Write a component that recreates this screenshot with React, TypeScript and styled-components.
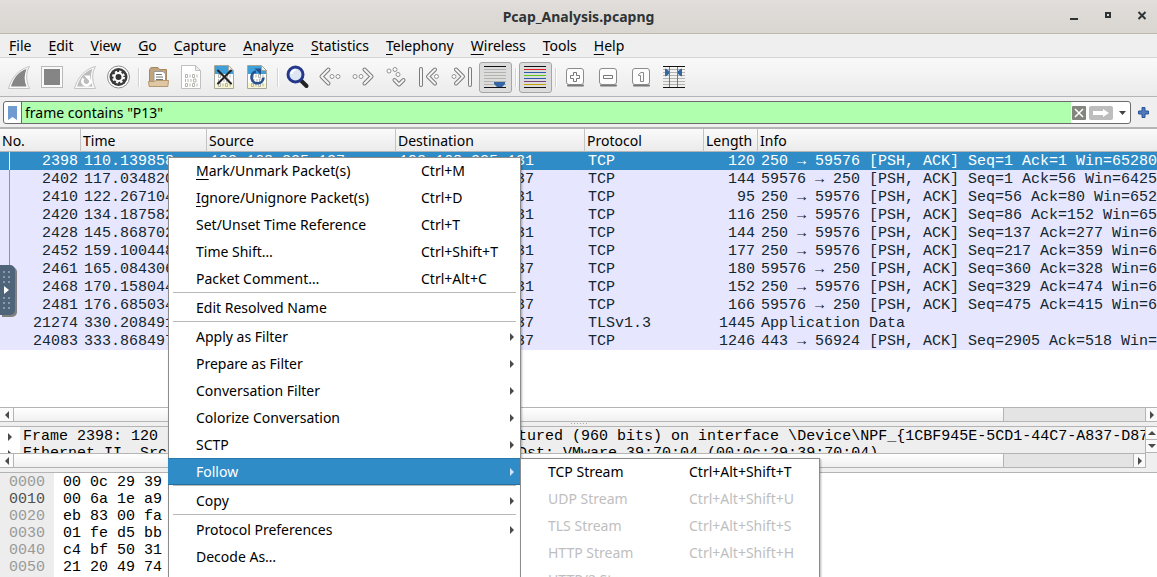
import React from "react";
import styled, { createGlobalStyle, css } from "styled-components";

const UI = `"Noto Sans", "Open Sans", sans-serif`;
const MONO = `"Liberation Mono", "DejaVu Sans Mono", monospace`;
const BLUE = "#308cc6";
const LINE = "#b4b4b4";

const GlobalStyle = createGlobalStyle`
  * { box-sizing: border-box; }
  body { margin: 0; background: #fff; overflow: hidden; }
  button, input { font: inherit; color: inherit; margin: 0; padding: 0; border: 0; background: none; }
`;

const Window = styled.div`
  position: relative;
  display: flex;
  flex-direction: column;
  height: 100vh;
  overflow: hidden;
  background: #efefef;
  color: #000;
  font: 14px/20px ${UI};
`;

const TitleBar = styled.header`
  position: relative;
  flex: none;
  display: flex;
  align-items: center;
  justify-content: center;
  height: 34px;
  background: linear-gradient(#e1dedb, #d9d5d0);
  border-bottom: 1px solid #bfb8b1;
`;

const Title = styled.h1`
  margin: 0;
  font-size: 14px;
  font-weight: 700;
  color: #2e3436;
`;

const WindowControls = styled.div`
  position: absolute;
  right: 3px;
  top: 4px;
  display: flex;
  gap: 10px;
`;

const WindowButton = styled.button`
  display: flex;
  align-items: center;
  justify-content: center;
  width: 24px;
  height: 24px;
`;

const MenuBar = styled.nav`
  flex: none;
  display: flex;
  height: 24px;
  border-bottom: 1px solid #d4d4d4;
`;

const MenuTitle = styled.button`
  padding: 0 8px 0 9px;
  font-size: 14px;
`;

const Mnemonic = styled.span`
  text-decoration: underline;
  text-decoration-thickness: 1px;
  text-underline-offset: 3px;
`;

const ToolBar = styled.div`
  flex: none;
  display: flex;
  align-items: center;
  height: 39px;
  padding: 1px 0 0 3px;
  background: linear-gradient(#f9f9f9, #ebebeb);
  border-bottom: 1px solid #b4b4b8;
`;

const Tool = styled.button<{ $on?: boolean }>`
  display: flex;
  align-items: center;
  justify-content: center;
  width: 33px;
  height: 31px;
  ${(p) =>
    p.$on &&
    css`
      background: #dcdcdc;
      border: 1px solid #a6a6a6;
      border-radius: 3px;
    `}
`;

const ToolGap = styled.span`
  width: 7px;
  height: 19px;
  background: linear-gradient(90deg, transparent 3px, #d2d2d2 3px, #d2d2d2 4px, #fff 4px, #fff 5px, transparent 5px);
`;

const FilterBar = styled.form`
  flex: none;
  display: flex;
  align-items: center;
  height: 32px;
  padding: 4px 8px 3px 3px;
  gap: 7px;
  border-bottom: 2px solid ${LINE};
`;

const FilterBox = styled.div`
  flex: 1;
  min-width: 0;
  display: flex;
  align-items: center;
  height: 23px;
  background: #fff;
  border: 1px solid #6c6c6c;
  border-radius: 3px;
  overflow: hidden;
`;

const FilterButton = styled.button<{ $w: number; $line?: boolean }>`
  flex: none;
  display: flex;
  align-items: center;
  justify-content: center;
  width: ${(p) => p.$w}px;
  height: 21px;
  border-right: ${(p) => (p.$line ? "1px solid #6c6c6c" : "0")};
`;

const FilterInput = styled.input`
  flex: 1;
  min-width: 0;
  height: 21px;
  padding: 0 3px;
  background: #afffaf;
  outline: none;
  font-size: 14px;
`;

const ListPane = styled.section`
  flex: none;
  padding-bottom: 57px;
  background: #fff;
  overflow: hidden;
`;

const PacketTable = styled.table`
  width: 100%;
  table-layout: fixed;
  border-collapse: separate;
  border-spacing: 0;
`;

const Col = styled.col<{ $w?: number }>`
  width: ${(p) => (p.$w ? `${p.$w}px` : "auto")};
`;

const Th = styled.th`
  height: 23px;
  padding: 2px 3px 0 2px;
  font: 14px/20px ${UI};
  text-align: left;
  white-space: nowrap;
  background: linear-gradient(#fafafa, #ebebeb);
  border-right: 1px solid #c4c4c4;
  border-bottom: 1px solid ${LINE};
  &:last-child { border-right: 0; }
`;

const Row = styled.tr<{ $selected: boolean }>`
  background: ${(p) => (p.$selected ? BLUE : "#e7e6ff")};
  color: ${(p) => (p.$selected ? "#fff" : "#12272e")};
`;

const Td = styled.td<{ $right?: boolean; $stream?: string }>`
  height: 18px;
  padding: 2px 3px 0 3px;
  font: 15px/16px ${MONO};
  text-align: ${(p) => (p.$right ? "right" : "left")};
  white-space: nowrap;
  overflow: hidden;
  ${(p) =>
    p.$stream &&
    css`
      background: linear-gradient(${p.$stream}, ${p.$stream}) 9px 0 / 1px 100% no-repeat;
    `}
`;

const ScrollBar = styled.div`
  flex: none;
  display: flex;
  height: 15px;
  background: #e4e4e4;
  border: solid ${LINE};
  border-width: 1px 0;
`;

const ScrollButton = styled.button<{ $side: "left" | "right" }>`
  flex: none;
  display: flex;
  align-items: center;
  justify-content: center;
  width: ${(p) => (p.$side === "left" ? 14 : 12)}px;
  background: #fafafa;
  border-${(p) => (p.$side === "left" ? "right" : "left")}: 1px solid ${LINE};
`;

const Track = styled.div`
  flex: 1;
  display: flex;
`;

const Thumb = styled.div<{ $part: number }>`
  width: ${(p) => p.$part}%;
  background: linear-gradient(#fff, #f0f0f0);
  border-right: 1px solid ${LINE};
`;

const Splitter = styled.div<{ $dots?: boolean }>`
  flex: none;
  display: flex;
  justify-content: center;
  height: 4px;
  &::before {
    content: "";
    width: 16px;
    height: 1px;
    margin-top: 1px;
    background: ${(p) => (p.$dots ? "repeating-linear-gradient(90deg, #aaa 0 1px, transparent 1px 3px)" : "none")};
  }
`;

const DetailPane = styled.section`
  flex: none;
  display: flex;
  border-top: 1px solid ${LINE};
`;

const DetailMain = styled.div`
  flex: 1;
  min-width: 0;
`;

const DetailLines = styled.div`
  height: 26px;
  padding-top: 1px;
  background: linear-gradient(90deg, #fff 20px, #eee 20px);
  overflow: hidden;
`;

const DetailLine = styled.div`
  display: flex;
  align-items: center;
  height: 17px;
  font: 15px/17px ${MONO};
  white-space: pre;
`;

const Expander = styled.button`
  flex: none;
  display: flex;
  justify-content: center;
  width: 20px;
  margin-right: 3px;
`;

const VerticalScroll = styled.div`
  flex: none;
  display: flex;
  flex-direction: column;
  width: 12px;
  border-left: 1px solid ${LINE};
`;

const StepButton = styled.button`
  display: flex;
  align-items: center;
  justify-content: center;
  height: 13px;
  background: #fafafa;
  border-bottom: 1px solid ${LINE};
`;

const HexPane = styled.section`
  flex: 1;
  min-height: 0;
  display: flex;
  background: #fff;
  border-top: 1px solid ${LINE};
  font: 15px/17px ${MONO};
  white-space: pre;
  overflow: hidden;
`;

const Offsets = styled.div`
  width: 54px;
  padding: 1px 0 0 9px;
  background: #ededed;
`;

const Offset = styled.div<{ $current: boolean }>`
  color: ${(p) => (p.$current ? "#4f4f4f" : "#999")};
`;

const Bytes = styled.div`
  padding: 1px 0 0 9px;
`;

const SideHandle = styled.button`
  position: absolute;
  left: 0;
  top: 265px;
  width: 15px;
  height: 50px;
  background: #4f6379;
  border-radius: 0 5px 5px 0;
  box-shadow: 2px 2px 0 #82807f;
`;

const PopupMenu = styled.div<{ $x: number; $y: number; $w: number }>`
  position: absolute;
  left: ${(p) => p.$x}px;
  top: ${(p) => p.$y}px;
  width: ${(p) => p.$w}px;
  padding-bottom: 12px;
  background: #fff;
  box-shadow: inset 0 0 0 1px #8c8c8c, 1px 1px 2px rgba(0, 0, 0, 0.3);
`;

const MenuItem = styled.button<{ $active?: boolean; $key: number }>`
  display: grid;
  grid-template-columns: ${(p) => p.$key}px 1fr 8px;
  align-items: center;
  width: 100%;
  height: 27px;
  padding: 0 5px 0 28px;
  font-size: 14px;
  text-align: left;
  white-space: nowrap;
  &:disabled { color: #bebebe; }
  ${(p) =>
    p.$active &&
    css`
      color: #fff;
      background: ${BLUE};
      box-shadow: inset 0 1px #2a7ab0, inset 0 -1px #2670a2;
    `}
`;

const Divider = styled.hr`
  height: 2px;
  margin: 0 5px;
  border: 0;
  border-top: 1px solid #b8b8b8;
`;

function Arrow({ dir, color = "#4a4a4a" }: { dir: "left" | "right" | "up" | "down"; color?: string }) {
  const d = {
    left: "M6 1v8L2 5z",
    right: "M2 1v8l4-4z",
    up: "M0 6h8L4 2z",
    down: "M0 2h8L4 6z",
  }[dir];
  return (
    <svg width="8" height="10" viewBox={dir === "up" || dir === "down" ? "0 -1 8 10" : "0 0 8 10"}>
      <path d={d} fill={color} />
    </svg>
  );
}

const Ico = ({ children }: { children: React.ReactNode }) => (
  <svg width="25" height="25" viewBox="0 0 25 25" fill="none">
    {children}
  </svg>
);

const Fin = ({ again }: { again?: boolean }) => (
  <Ico>
    <path d="M1.500 23.500C4 14 11 4 22.500 1.500C18.500 8 19 16 22.500 23.500Z" fill="#fafafa" stroke="#c4c4c4" />
    <path d="M4 21.500C6.500 13 12 6 19.500 4C17 10 17 16 19.500 21.500Z" fill={again ? "#bcbcbc" : "#868686"} />
    {again && (
      <>
        <path d="M10.500 13.500a4 4 0 1 0 6.500 1" stroke="#fff" strokeWidth="2.500" />
        <path d="M11 10.500h6v6z" fill="#fff" />
      </>
    )}
  </Ico>
);

const Doc = ({ grey, children }: { grey?: boolean; children?: React.ReactNode }) => (
  <Ico>
    <path d="M2.500 .500h14l5 5v18h-19z" fill="#fff" stroke={grey ? "#c0c0c0" : "#a5a89b"} />
    {!grey && <path d="M3 1h13.500l4.500 5v3H3z" fill="#3fa0d8" />}
    {!grey && <path d="M3 18h18v5H3z" fill="#f6f6d0" />}
    <path d="M16.500 .500v5h5z" fill="#eee" stroke={grey ? "#c0c0c0" : "#a5a89b"} />
    {[9.5, 14, 18.5].map((y, i) => (
      <path
        key={y}
        d={i === 1 ? `M6.500 ${y}v3M9 ${y}v3M12 ${y}v3M14.500 ${y}h2.500v3h-2.500z` : `M6.500 ${y}h2v3h-2zM11 ${y}v3M13.500 ${y}h2v3h-2zM18 ${y}v3`}
        stroke="#b5b5ae"
      />
    ))}
    {children}
  </Ico>
);

const Ring = ({ x, y }: { x: number; y: number }) => <circle cx={x} cy={y} r="2" fill="#fff" stroke="#929292" />;
const Chevron = ({ d }: { d: string }) => (
  <>
    <path d={d} stroke="#7c7c7c" strokeWidth="4" strokeLinecap="round" strokeLinejoin="round" />
    <path d={d} stroke="#f4f4f4" strokeWidth="2" strokeLinecap="round" strokeLinejoin="round" />
  </>
);

const ZoomBox = ({ children }: { children: React.ReactNode }) => (
  <Ico>
    <path d="M5 20.500h15" stroke="#777" strokeWidth="2" strokeLinecap="round" />
    <rect x="3.500" y="3.500" width="17" height="16" rx="2.500" fill="#fdfdfd" stroke="#8c8c8c" />
    {children}
  </Ico>
);

const Lines = ({ colors }: { colors: string[] }) => (
  <>
    {colors.map((c, i) => (
      <rect key={i} x="1" y={1 + i * 3} width="22" height="1" fill={c} />
    ))}
  </>
);
const G = "#b3b3ad";
const K = "#111";

const icons: Record<string, React.ReactNode> = {
  Start: <Fin />,
  Stop: (
    <Ico>
      <rect x="1.500" y="1.500" width="21" height="21" fill="#fafafa" stroke="#b9b9b9" />
      <rect x="4" y="4" width="16" height="16" fill="#858585" />
    </Ico>
  ),
  Restart: <Fin again />,
  Options: (
    <Ico>
      <circle cx="12.500" cy="12" r="11" fill="#fff" stroke="#8d8d8d" />
      <circle cx="12.500" cy="12" r="9" fill="#3a3a3a" />
      <circle cx="12.500" cy="12" r="5.500" stroke="#fff" strokeWidth="2" strokeDasharray="2.300 2.020" />
      <circle cx="12.500" cy="12" r="4" fill="#333" stroke="#fff" strokeWidth="2" />
    </Ico>
  ),
  Open: (
    <Ico>
      <path d="M3.500 21V4.500l1.500-2h7l1.500 2h7V21z" fill="#bfa47e" stroke="#a38963" />
      <path d="M8 6.500h9l2.500 2.500v8H8z" fill="#fff" stroke="#999" />
      <path d="M10 9.500h6M10 12h7M10 14.500h7" stroke="#777" />
      <path d="M2.500 16.500h6l1-1h13l-.7 6H3.200z" fill="#dfc7a3" stroke="#b3976e" />
    </Ico>
  ),
  Save: <Doc grey />,
  Close: (
    <Doc>
      <path d="M6 5.500l13 13M19 5.500L6 18.500" stroke="#222" strokeWidth="2" strokeLinecap="round" />
    </Doc>
  ),
  Reload: (
    <Doc>
      <path d="M11 6.500a6 6 0 1 0 7.500 6" stroke="#27508f" strokeWidth="2.600" />
      <path d="M9.500 3.500h6.500v6.500z" fill="#27508f" />
    </Doc>
  ),
  Find: (
    <Ico>
      <path d="M16 15.500l5.500 5.500" stroke="#222" strokeWidth="4" strokeLinecap="round" />
      <circle cx="10.500" cy="9.500" r="7.500" fill="#dce6f5" stroke="#25388c" strokeWidth="3" />
      <path d="M6.500 9a4 4 0 0 1 4-4" stroke="#fff" strokeWidth="2" />
    </Ico>
  ),
  Back: (
    <Ico>
      <Chevron d="M10.500 4.500L3.500 11.500L10.500 18.500" />
      <Ring x={14} y={11.5} />
      <Ring x={20} y={11.5} />
    </Ico>
  ),
  Forward: (
    <Ico>
      <Ring x={4} y={11.5} />
      <Ring x={10} y={11.5} />
      <Chevron d="M13.500 4.500L20.500 11.500L13.500 18.500" />
    </Ico>
  ),
  "Go to": (
    <Ico>
      <Ring x={5} y={6} />
      <Ring x={11} y={4.5} />
      <Ring x={14} y={9.5} />
      <Chevron d="M10.500 15l4.500 4.500 4.500-4.500" />
    </Ico>
  ),
  First: (
    <Ico>
      <Chevron d="M4 4v16" />
      <Chevron d="M18 4.500L11 11.500L18 18.500" />
      <Ring x={19.5} y={11.5} />
    </Ico>
  ),
  Last: (
    <Ico>
      <Ring x={4} y={11.5} />
      <Chevron d="M6 4.500L13 11.500L6 18.500" />
      <Chevron d="M20 4v16" />
    </Ico>
  ),
  "Auto scroll": (
    <Ico>
      <Lines colors={[K, G, G, G, G, G, G, K]} />
      <path d="M11 17h11v2l-3 3h-5l-3-3z" fill="#3465a4" />
    </Ico>
  ),
  Colorize: (
    <Ico>
      <Lines colors={[K, "#e02020", "#2f5ba8", "#5bcb1a", "#2f5ba8", "#75407b", "#c4a000", K]} />
    </Ico>
  ),
  "Zoom in": (
    <ZoomBox>
      <path d="M10.500 7.500h3v3h3v3h-3v3h-3v-3h-3v-3h3z" stroke="#777" />
    </ZoomBox>
  ),
  "Zoom out": (
    <ZoomBox>
      <path d="M7.500 10.500h9v3h-9z" stroke="#777" />
    </ZoomBox>
  ),
  "Normal size": (
    <ZoomBox>
      <path d="M9.500 9.500l2.500-2h2.500v9h-3v-6h-2z" stroke="#888" />
    </ZoomBox>
  ),
  "Resize columns": (
    <Ico>
      <Lines colors={[K, G, G, G, G, G, G, K]} />
      <path d="M7.500 2v20M15.500 2v20" stroke="#777" />
      <path d="M3.500 4l3 2v3l-3 2zM19.500 4l-3 2v3l3 2z" fill="#3465a4" stroke="#3465a4" />
    </Ico>
  ),
};

const tools = [
  "Start", "Stop", "Restart", "Options", "|", "Open", "Save", "Close", "Reload", "|",
  "Find", "Back", "Forward", "Go to", "First", "Last", "Auto scroll", "|", "Colorize", "|",
  "Zoom in", "Zoom out", "Normal size", "Resize columns",
];

const menus = ["File", "Edit", "View", "Go", "Capture", "Analyze", "Statistics", "Telephony", "Wireless", "Tools", "Help"];

const A = "192.168.225.137";
const B = "192.168.225.131";
const columns: [string, number?][] = [
  ["No.", 81], ["Time", 126], ["Source", 189], ["Destination", 189], ["Protocol", 119], ["Length", 54], ["Info"],
];
const packets: [number, string, string, string, string, number, string][] = [
  [2398, "110.139858", A, B, "TCP", 120, "250 → 59576 [PSH, ACK] Seq=1 Ack=1 Win=65280"],
  [2402, "117.034820", B, A, "TCP", 144, "59576 → 250 [PSH, ACK] Seq=1 Ack=56 Win=64256"],
  [2410, "122.267104", A, B, "TCP", 95, "250 → 59576 [PSH, ACK] Seq=56 Ack=80 Win=65280"],
  [2420, "134.187582", A, B, "TCP", 116, "250 → 59576 [PSH, ACK] Seq=86 Ack=152 Win=65280"],
  [2428, "145.868702", A, B, "TCP", 144, "250 → 59576 [PSH, ACK] Seq=137 Ack=277 Win=65280"],
  [2452, "159.100448", A, B, "TCP", 177, "250 → 59576 [PSH, ACK] Seq=217 Ack=359 Win=65280"],
  [2461, "165.084306", B, A, "TCP", 180, "59576 → 250 [PSH, ACK] Seq=360 Ack=328 Win=64256"],
  [2468, "170.158044", A, B, "TCP", 152, "250 → 59576 [PSH, ACK] Seq=329 Ack=474 Win=65280"],
  [2481, "176.685034", B, A, "TCP", 166, "59576 → 250 [PSH, ACK] Seq=475 Ack=415 Win=64256"],
  [21274, "330.208491", B, A, "TLSv1.3", 1445, "Application Data"],
  [24083, "333.868497", B, A, "TCP", 1246, "443 → 56924 [PSH, ACK] Seq=2905 Ack=518 Win=64240"],
];

const hexRows = [
  ["0000", "00 0c 29 39"], ["0010", "00 6a 1e a9"], ["0020", "eb 83 00 fa"],
  ["0030", "01 fe d5 bb"], ["0040", "c4 bf 50 31"], ["0050", "21 20 49 74"],
];

type Entry = { label: string; keys?: string; sub?: boolean; mnemonic?: boolean; disabled?: boolean };
const contextEntries: (Entry | null)[] = [
  { label: "Mark/Unmark Packet(s)", keys: "Ctrl+M", mnemonic: true },
  { label: "Ignore/Unignore Packet(s)", keys: "Ctrl+D", mnemonic: true },
  { label: "Set/Unset Time Reference", keys: "Ctrl+T" },
  { label: "Time Shift…", keys: "Ctrl+Shift+T" },
  { label: "Packet Comment…", keys: "Ctrl+Alt+C" },
  null,
  { label: "Edit Resolved Name" },
  null,
  { label: "Apply as Filter", sub: true },
  { label: "Prepare as Filter", sub: true },
  { label: "Conversation Filter", sub: true },
  { label: "Colorize Conversation", sub: true },
  { label: "SCTP", sub: true },
  { label: "Follow", sub: true },
  null,
  { label: "Copy", sub: true },
  null,
  { label: "Protocol Preferences", sub: true },
  { label: "Decode As…" },
];
const followEntries: Entry[] = [
  { label: "TCP Stream", keys: "Ctrl+Alt+Shift+T" },
  { label: "UDP Stream", keys: "Ctrl+Alt+Shift+U", disabled: true },
  { label: "TLS Stream", keys: "Ctrl+Alt+Shift+S", disabled: true },
  { label: "HTTP Stream", keys: "Ctrl+Alt+Shift+H", disabled: true },
  { label: "HTTP/2 Stream", disabled: true },
];

function MenuEntry({ entry, keyColumn }: { entry: Entry; keyColumn: number }) {
  const active = entry.label === "Follow";
  return (
    <MenuItem role="menuitem" $key={keyColumn} $active={active} disabled={entry.disabled}>
      <span>
        {entry.mnemonic ? (
          <>
            <Mnemonic>{entry.label[0]}</Mnemonic>
            {entry.label.slice(1)}
          </>
        ) : (
          entry.label
        )}
      </span>
      <span>{entry.keys}</span>
      {entry.sub && <Arrow dir="right" color={active ? "#cfe6f5" : undefined} />}
    </MenuItem>
  );
}

export default function App() {
  return (
    <Window>
      <GlobalStyle />
      <TitleBar>
        <Title>Pcap_Analysis.pcapng</Title>
        <WindowControls>
          <WindowButton aria-label="Minimize">
            <svg width="10" height="10"><path d="M1 7h8v2H1z" fill="#2e3436" /></svg>
          </WindowButton>
          <WindowButton aria-label="Maximize">
            <svg width="10" height="10"><path d="M3 2h4v4H3z" fill="none" stroke="#2e3436" strokeWidth="2" /></svg>
          </WindowButton>
          <WindowButton aria-label="Close window">
            <svg width="10" height="10"><path d="M1.500 1l7 7M8.500 1l-7 7" stroke="#2e3436" strokeWidth="2" /></svg>
          </WindowButton>
        </WindowControls>
      </TitleBar>

      <MenuBar>
        {menus.map((m) => (
          <MenuTitle key={m}>
            <Mnemonic>{m[0]}</Mnemonic>
            {m.slice(1)}
          </MenuTitle>
        ))}
      </MenuBar>

      <ToolBar>
        {tools.map((t, i) =>
          t === "|" ? (
            <ToolGap key={i} />
          ) : (
            <Tool key={t} aria-label={t} $on={t === "Auto scroll" || t === "Colorize"}>
              {icons[t]}
            </Tool>
          )
        )}
      </ToolBar>

      <FilterBar onSubmit={(e) => e.preventDefault()}>
        <FilterBox>
          <FilterButton type="button" aria-label="Saved filters" $w={18} $line>
            <svg width="9" height="14"><path d="M0 0h9v14l-4.500-3L0 14z" fill="#6f9bd1" /></svg>
          </FilterButton>
          <FilterInput aria-label="Display filter" defaultValue={'frame contains "P13"'} />
          <FilterButton type="button" aria-label="Clear filter" $w={16}>
            <svg width="14" height="14">
              <rect width="14" height="14" rx="1" fill="#85857f" />
              <path d="M3 3l8 8M11 3l-8 8" stroke="#fff" strokeWidth="1.500" />
            </svg>
          </FilterButton>
          <FilterButton aria-label="Apply filter" $w={28}>
            <svg width="24" height="14">
              <rect width="24" height="14" rx="2" fill="#bdbdbd" />
              <path d="M4 5h10V3l6 4-6 4V9H4z" fill="#fff" />
            </svg>
          </FilterButton>
          <FilterButton type="button" aria-label="Recent filters" $w={15}>
            <svg width="7" height="4"><path d="M0 0h7L3.500 4z" fill="#444" /></svg>
          </FilterButton>
        </FilterBox>
        <FilterButton type="button" aria-label="Add filter button" $w={11}>
          <svg width="11" height="11">
            <path d="M4 .500h3v3.500h3.500v3H7v3.500H4V7H.500V4H4z" fill="#4f7bbd" stroke="#2c559b" />
          </svg>
        </FilterButton>
      </FilterBar>

      <ListPane>
        <PacketTable>
          <colgroup>
            {columns.map(([name, w]) => (
              <Col key={name} $w={w} />
            ))}
          </colgroup>
          <thead>
            <tr>
              {columns.map(([name]) => (
                <Th key={name}>{name}</Th>
              ))}
            </tr>
          </thead>
          <tbody>
            {packets.map((p, r) => (
              <Row key={p[0]} $selected={r === 0}>
                {p.map((v, c) => (
                  <Td
                    key={c}
                    $right={c === 0 || c === 5}
                    $stream={c === 0 && r < 9 ? (r === 0 ? "#fff" : "#8b93a4") : undefined}
                  >
                    {v}
                  </Td>
                ))}
              </Row>
            ))}
          </tbody>
        </PacketTable>
      </ListPane>
      <ScrollBar>
        <ScrollButton $side="left" aria-label="Scroll list left"><Arrow dir="left" /></ScrollButton>
        <Track><Thumb $part={87.5} /></Track>
        <ScrollButton $side="right" aria-label="Scroll list right"><Arrow dir="right" /></ScrollButton>
      </ScrollBar>
      <Splitter $dots />

      <DetailPane>
        <DetailMain>
          <DetailLines>
            <DetailLine>
              <Expander aria-label="Expand frame"><Arrow dir="right" /></Expander>
              {"Frame 2398: 120 bytes on wire (960 bits), 120 bytes captured (960 bits) on interface \\Device\\NPF_{1CBF945E-5CD1-44C7-A837-D87"}
            </DetailLine>
            <DetailLine>
              <Expander aria-label="Expand Ethernet"><Arrow dir="right" /></Expander>
              Ethernet II, Src: VMware_c0:00:08 (00:50:56:c0:00:08), Dst: VMware_39:70:04 (00:0c:29:39:70:04)
            </DetailLine>
          </DetailLines>
          <ScrollBar>
            <ScrollButton $side="left" aria-label="Scroll details left"><Arrow dir="left" /></ScrollButton>
            <Track><Thumb $part={88.5} /></Track>
            <ScrollButton $side="right" aria-label="Scroll details right"><Arrow dir="right" /></ScrollButton>
          </ScrollBar>
        </DetailMain>
        <VerticalScroll>
          <StepButton aria-label="Scroll details up"><Arrow dir="up" /></StepButton>
          <StepButton aria-label="Scroll details down"><Arrow dir="down" /></StepButton>
        </VerticalScroll>
      </DetailPane>
      <Splitter />

      <HexPane>
        <Offsets>
          {hexRows.map(([o]) => (
            <Offset key={o} $current={o === "0010"}>{o}</Offset>
          ))}
        </Offsets>
        <Bytes>
          {hexRows.map(([o, b]) => (
            <div key={o}>{b}</div>
          ))}
        </Bytes>
      </HexPane>

      <SideHandle aria-label="Open side panel">
        <svg width="15" height="50">
          {[7, 12, 17, 33, 38, 43].map((y) => (
            <path key={y} d={`M3 ${y}h2M8 ${y}h2`} stroke="#8799ac" strokeWidth="2" />
          ))}
          <path d="M4 21v8l5-4z" fill="#fff" />
        </svg>
      </SideHandle>

      <PopupMenu role="menu" $x={168} $y={157} $w={353}>
        {contextEntries.map((e, i) => (e ? <MenuEntry key={i} entry={e} keyColumn={225} /> : <Divider key={i} />))}
      </PopupMenu>
      <PopupMenu role="menu" $x={520} $y={458} $w={300}>
        {followEntries.map((e) => (
          <MenuEntry key={e.label} entry={e} keyColumn={141} />
        ))}
      </PopupMenu>
    </Window>
  );
}
